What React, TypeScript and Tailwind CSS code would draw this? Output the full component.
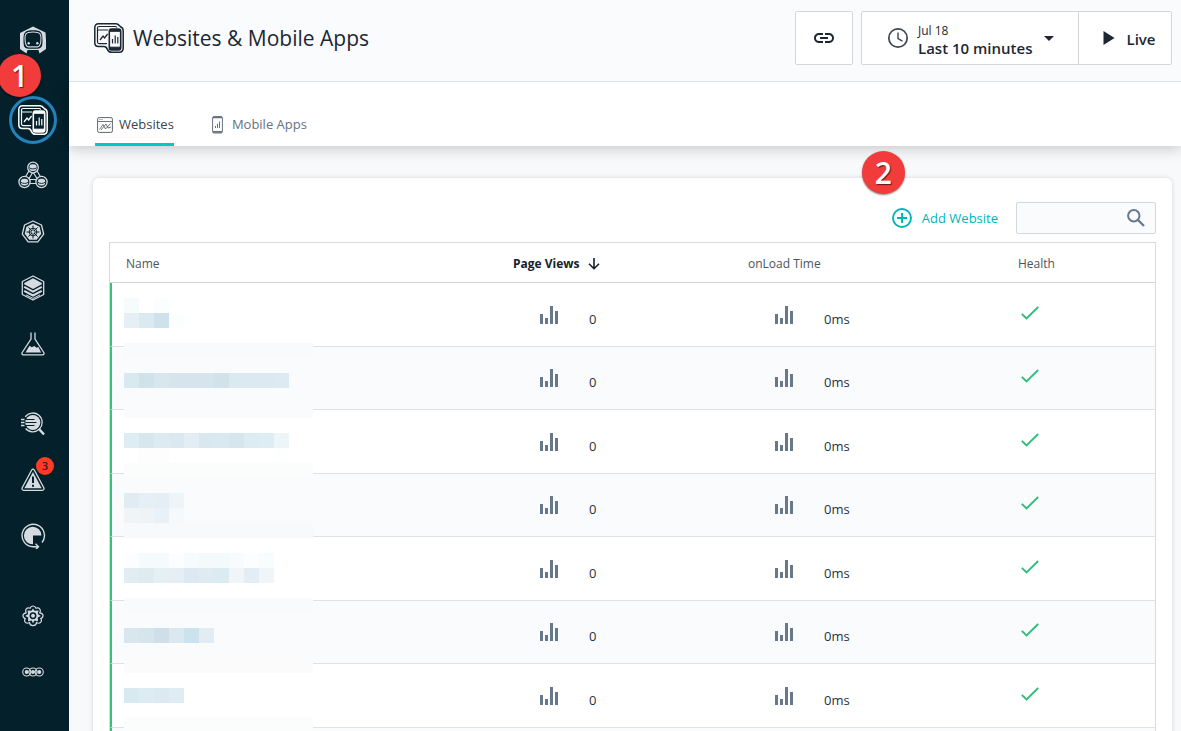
import type { ReactNode } from "react";

const W = "bg-white";
const N = "";

type Strip = { base: string; tiles?: string[] };

const ZEBRA = "bg-[#fafbfd]";

// Pixelated cover over the name column, one entry per 15px band.
const mosaic: Strip[] = [
  { base: W, tiles: ["bg-[#f6fbfc]", N, "bg-[#fcfefe]"] },
  { base: W, tiles: ["bg-[#e6eef6]", "bg-[#dbe9f0]", "bg-[#cfe2ec]", "bg-[#fcfefe]"] },
  { base: W },
  { base: "bg-[#f9fafc]" },
  { base: ZEBRA },
  {
    base: ZEBRA,
    tiles: ["bg-[#d9e9f0]", "bg-[#d0e2ea]", "bg-[#d8e6ee]", "bg-[#d6e4ed]", "bg-[#d6e4ed]", "bg-[#d6e4ed]", "bg-[#d2e2eb]", "bg-[#dbe9f1]", "bg-[#dbe9f1]", "bg-[#dde9f1]", "bg-[#ddeaf2]"],
  },
  { base: ZEBRA },
  { base: "bg-[#fafbfc]" },
  { base: W },
  {
    base: W,
    tiles: ["bg-[#deecf4]", "bg-[#d8e7ee]", "bg-[#deeaf2]", "bg-[#dae8f2]", "bg-[#e3edf3]", "bg-[#d9e7ee]", "bg-[#dae8f1]", "bg-[#d7e5ef]", "bg-[#ddebf3]", "bg-[#deecf4]", "bg-[#ecf5f8]"],
  },
  { base: W, tiles: [N, "bg-[#fdfdfe]", "bg-[#fdfdfe]", N, N, N, N, N, N, N, "bg-[#fdfefe]"] },
  { base: "bg-[#fbfdfc]" },
  { base: ZEBRA },
  { base: ZEBRA, tiles: ["bg-[#e0ecf2]", "bg-[#e6eff5]", "bg-[#e5edf5]", "bg-[#eef5f9]"] },
  { base: ZEBRA, tiles: ["bg-[#f0f4f6]", "bg-[#eef3f5]", "bg-[#e8f0f8]", "bg-[#f5f9fb]"] },
  { base: "bg-[#f8f9fb]" },
  { base: W },
  {
    base: W,
    tiles: ["bg-[#fcfdfe]", "bg-[#f5fafc]", "bg-[#f5fafc]", "bg-[#fbfdfe]", "bg-[#f6fbfc]", "bg-[#f4f9fa]", "bg-[#f3fafb]", "bg-[#f7fbfc]", "bg-[#fcfdfe]", "bg-[#f7fcfc]"],
  },
  {
    base: W,
    tiles: ["bg-[#e1edf3]", "bg-[#dfebf1]", "bg-[#e4f0f3]", "bg-[#e6edf5]", "bg-[#dce9f2]", "bg-[#dfeaf1]", "bg-[#daebf1]", "bg-[#eff5f9]", "bg-[#e4ecf4]", "bg-[#eff5f8]"],
  },
  { base: W },
  { base: "bg-[#f9fafc]" },
  { base: ZEBRA },
  { base: ZEBRA, tiles: ["bg-[#d8e6ee]", "bg-[#d4e5ec]", "bg-[#cfdfe9]", "bg-[#dce8f0]", "bg-[#cce2ec]", "bg-[#e2edf3]"] },
  { base: ZEBRA },
  { base: "bg-[#fbfbfc]" },
  { base: W },
  { base: W, tiles: ["bg-[#d9e9f0]", "bg-[#ddebf3]", "bg-[#dce9f1]", "bg-[#dfecf4]"] },
  { base: W },
  { base: "bg-[#fbfdfc]" },
];

function Svg({ size, box, className, children }: { size: string; box: string; className?: string; children: ReactNode }) {
  return (
    <svg className={`${size} ${className ?? ""}`} viewBox={box} fill="none" aria-hidden="true">
      {children}
    </svg>
  );
}

function WebMobileIcon() {
  return (
    <Svg size="size-[30px]" box="0 0 30 30">
      <path d="M4.500.8H22c2.500 0 3 1.500 4.500 3 2 .8 2.700 2.200 2.700 4.200v17c0 2.700-1.500 4.200-4 4.200h-7.700c-2 0-3.200-.6-4-2.600-.7-1.800-1.400-3-3.500-3H4.500C2 23.600.8 22 .8 19.800V4.500C.8 2.200 2.200.8 4.500.8Z" stroke="currentColor" strokeWidth="1.500" />
      <path d="M13 20.600H5c-1 0-1.500-.6-1.500-1.500V5c0-1 .6-1.500 1.500-1.500h16c1 0 1.500.4 1.800 1M3.500 7H14" stroke="currentColor" strokeWidth="1.200" />
      <path d="m6 17 3-4 1.600 2 3-4" stroke="currentColor" strokeWidth="1.300" />
      <rect x="15.300" y="6.100" width="11.400" height="20.800" rx="2.200" stroke="currentColor" strokeWidth="1.600" />
      <path d="M16 8.300V7h10v1.300ZM16 24.200v2.300h10v-2.300Z" fill="currentColor" stroke="currentColor" />
      <path d="M18.500 20.500V16M21.200 20.500v-8M23.800 20.500V14" stroke="currentColor" strokeWidth="1.200" />
    </Svg>
  );
}

function LogoIcon() {
  return (
    <Svg size="size-7" box="0 0 28 28">
      <path fillRule="evenodd" d="M14 .5 26.500 6.500 27 14v9l-6.500 4.500-1-3.500h-11l-1 3.500L1 23V7Zm-5 4.300C5.500 5.500 4.500 8 4.500 14s.5 8.500 5 8.700h9c4.500-.2 5-3 5-8.700s-1-8.500-4.500-9.200c-3-.6-7-.6-10 0Z" fill="currentColor" />
      <path d="M9.300 6.500c3-.6 6.500-.6 9.400 0 2.600.5 3.300 2 3.300 5.500 0 6-.7 8.700-3.500 8.900h-9C6.700 20.700 6 18 6 12c0-3.500.7-5 3.300-5.500Z" stroke="currentColor" strokeWidth="1.100" />
      <circle cx="9.700" cy="17.300" r="1.200" fill="currentColor" />
      <circle cx="18.300" cy="17.300" r="1.200" fill="currentColor" />
    </Svg>
  );
}

function NodesIcon() {
  return (
    <Svg size="size-[30px]" box="0 0 30 30">
      <path d="M15 7 7 20.500h16Z" stroke="currentColor" strokeWidth="5.200" strokeLinejoin="round" />
      <path d="M15 7 7 20.500h16Z" stroke="#04202b" strokeWidth="2.800" strokeLinejoin="round" />
      <g fill="#04202b" stroke="currentColor" strokeWidth="1.300">
        <circle cx="15" cy="6.500" r="5.300" />
        <circle cx="6.500" cy="21" r="5.600" />
        <circle cx="23.500" cy="21" r="5.600" />
      </g>
      <g fill="currentColor">
        <rect x="11.300" y="3.300" width="7.400" height="6.600" rx="3" />
        <rect x="2.800" y="17.800" width="7.400" height="6.600" rx="3" />
        <rect x="19.800" y="17.800" width="7.400" height="6.600" rx="3" />
      </g>
      <path d="M11.500 6.800c1.500 1.500 5.500 1.500 7 0M3 21.300c1.500 1.500 5.500 1.500 7 0M20 21.300c1.500 1.500 5.500 1.500 7 0" stroke="#04202b" strokeWidth=".9" />
    </Svg>
  );
}

function HelmIcon() {
  return (
    <Svg size="size-6" box="0 0 24 24">
      <path d="m12 1 8.500 4 2.200 9.200-5.900 7.600H7.200L1.300 14.200 3.500 5Z" stroke="currentColor" strokeWidth="1.300" strokeLinejoin="round" />
      <path d="m12 3.500 6.600 3.200 1.700 7.100-4.600 6H8.300l-4.600-6 1.700-7.100Z" fill="currentColor" />
      <g stroke="#04202b" strokeWidth="1">
        <circle cx="12" cy="12" r="3.800" />
        <path d="M12 5.500v13M5.500 12h13M7.400 7.400l9.200 9.200M16.600 7.400l-9.200 9.200" />
      </g>
      <circle cx="12" cy="12" r="1.200" fill="currentColor" />
    </Svg>
  );
}

function LayersIcon() {
  return (
    <Svg size="size-[26px]" box="0 0 26 26">
      <path d="m13 1 10.700 5.500v13L13 25 2.300 19.500v-13Z" stroke="currentColor" strokeWidth="1.300" strokeLinejoin="round" />
      <path d="m13 3.300 8.800 4.600v1.300L13 13.900 4.200 9.200V7.900Z" fill="currentColor" />
      <path d="m4.200 11.900 8.800 4.700 8.800-4.700M4.200 15.800l8.800 4.700 8.800-4.700" stroke="currentColor" strokeWidth="2" />
      <path d="m6 19.900 7 3.500 7-3.500" stroke="currentColor" strokeWidth="1" />
    </Svg>
  );
}

function FlaskIcon() {
  return (
    <Svg size="size-6" box="0 0 24 24">
      <path d="M10 .5V7L1.200 20.500c-.7 1.200 0 2.300 1.200 2.300h19.200c1.200 0 1.900-1.100 1.200-2.300L14 7V.5" stroke="currentColor" strokeWidth="1.300" />
      <path d="m4.500 20.600 4-6.800 2.300 1.500 2.600-1.300 2.200 1.800 1.800-.7 2.700 5.500Z" fill="currentColor" />
    </Svg>
  );
}

function AnalyzeIcon() {
  return (
    <Svg size="size-6" box="0 0 24 24">
      <path d="M4.200 4.800A9.400 9.400 0 1 1 4.600 16.500" stroke="currentColor" strokeWidth="1.300" />
      <circle cx="11.800" cy="10.500" r="7.500" fill="currentColor" />
      <path d="m18 17 5 5.500" stroke="currentColor" strokeWidth="2.600" />
      <path d="M0 7.500h3.500M0 10.500h3.500M0 13.500h3.500" stroke="currentColor" strokeWidth="1.300" />
      <path d="M4.500 7.500h9M4.500 10.500h11M4.500 13.500h9" stroke="#04202b" strokeWidth="1.200" />
    </Svg>
  );
}

function WarningIcon() {
  return (
    <Svg size="size-6" box="0 0 24 24">
      <path d="M10.700 2c.6-1.200 2-1.200 2.600 0l9.500 17.700c.6 1.300-.1 2.600-1.500 2.600H2.700c-1.400 0-2.100-1.300-1.500-2.600Z" stroke="currentColor" strokeWidth="1.300" />
      <path d="M12 4 20.600 20.200H3.400Z" fill="currentColor" />
      <path d="M12 8.500V15M12 16.800v1.900" stroke="#04202b" strokeWidth="2" />
    </Svg>
  );
}

function SloIcon() {
  return (
    <Svg size="size-[26px]" box="0 0 26 26">
      <path d="M22 19.500A11.200 11.200 0 1 0 13 23.700h5M15.500 20.800l3 2.900-3 2.900" stroke="currentColor" strokeWidth="1.400" />
      <path d="M21.500 12.500A8.800 8.800 0 1 0 13 21.300v-8.800Z" fill="currentColor" />
    </Svg>
  );
}

function GearIcon() {
  return (
    <Svg size="size-[22px]" box="0 0 22 22">
      <path d="M11 1c2 0 2.600 1 3 2.300 1.200-.5 2.700-.6 3.800.8 1 1.300.6 2.500 0 3.700 1.500.2 2.900.9 3.200 2.500.3 1.800-.8 2.800-2.200 3.300.8 1.300.9 2.800-.4 4-1.300 1-2.700.7-3.900 0-.2 1.600-1.200 3-3.500 3s-3.300-1.400-3.500-3c-1.200.7-2.600 1-3.900 0-1.300-1.200-1.200-2.700-.4-4C1.800 13.100.7 12.100 1 10.300c.3-1.600 1.700-2.300 3.200-2.500-.6-1.200-1-2.400 0-3.700C5.300 2.700 6.800 2.800 8 3.300 8.400 2 9 1 11 1Z" stroke="currentColor" strokeWidth="1.200" />
      <path d="m11 3.500 1.500 2.200 4-.2-.7 3.500 3 2-3 1.600.2 3.700-3.600-.7L11 18.300l-1.400-2.700-3.600.7.200-3.700-3-1.600 3-2-.7-3.500 4 .2Z" fill="currentColor" />
      <circle cx="11" cy="10.800" r="2.700" fill="currentColor" stroke="#04202b" strokeWidth="1.500" />
    </Svg>
  );
}

function MoreIcon() {
  return (
    <Svg size="size-[22px]" box="0 0 22 22">
      <g stroke="currentColor" strokeWidth="1.100">
        <circle cx="4.700" cy="11" r="4" />
        <circle cx="11" cy="11" r="4" />
        <circle cx="17.300" cy="11" r="4" />
      </g>
      <g fill="currentColor">
        <circle cx="4.700" cy="11" r="2" />
        <circle cx="11" cy="11" r="2" />
        <circle cx="17.300" cy="11" r="2" />
      </g>
    </Svg>
  );
}

function NavButton({ label, children }: { label: string; children: ReactNode }) {
  return (
    <button type="button" aria-label={label} className="flex h-14 w-full items-center justify-center">
      {children}
    </button>
  );
}

function Marker({ className, children }: { className: string; children: ReactNode }) {
  return (
    <span className={`absolute flex size-[43px] items-center justify-center rounded-full bg-[#f23b3b] text-[30px] leading-none font-semibold text-white shadow-[0_1px_2px_rgba(0,0,0,0.5)] [text-shadow:1px_1px_1px_rgba(0,0,0,0.6)] ${className}`}>
      {children}
    </span>
  );
}

function Sidebar() {
  return (
    <nav aria-label="Main" className="relative flex w-[69px] shrink-0 flex-col bg-[#04202b] pt-3 pr-[3px] text-[#d5dbe0]">
      <NavButton label="Home"><LogoIcon /></NavButton>
      <div className="mt-6">
        <button type="button" aria-label="Websites and mobile apps" className="flex h-14 w-full items-center justify-center text-white">
          <span className="flex size-12 items-center justify-center rounded-full border-3 border-[#2384bd]">
            <WebMobileIcon />
          </span>
        </button>
        <NavButton label="Applications"><NodesIcon /></NavButton>
        <NavButton label="Kubernetes"><HelmIcon /></NavButton>
        <NavButton label="Infrastructure"><LayersIcon /></NavButton>
        <NavButton label="Synthetic monitoring"><FlaskIcon /></NavButton>
      </div>
      <div className="mt-6">
        <NavButton label="Analytics"><AnalyzeIcon /></NavButton>
        <NavButton label="Events">
          <span className="relative">
            <WarningIcon />
            <span className="absolute -top-[11px] left-[15px] flex size-[18px] items-center justify-center rounded-full bg-[#ff3b26] text-[11px] font-semibold text-[#222]">3</span>
          </span>
        </NavButton>
        <NavButton label="Service levels"><SloIcon /></NavButton>
      </div>
      <div className="mt-6">
        <NavButton label="Settings"><GearIcon /></NavButton>
        <NavButton label="More"><MoreIcon /></NavButton>
      </div>
      <Marker className="top-[54px] -left-0.5">1</Marker>
    </nav>
  );
}

function Header() {
  return (
    <header className="relative z-20 flex h-[82px] shrink-0 items-start justify-between border-b border-[#dce3e8] bg-[#fafbfd] pr-[9px] pl-[25px] text-[#1c2733]">
      <div className="flex items-center gap-[9px] pt-[22px]">
        <WebMobileIcon />
        <h1 className="text-[21px] leading-8">Websites &amp; Mobile Apps</h1>
      </div>
      <div className="flex gap-2 pt-[11px]">
        <button type="button" aria-label="Copy link" className="flex h-[54px] w-[58px] items-center justify-center rounded-xs border border-[#d3d7da] bg-white">
          <Svg size="size-6" box="0 0 24 24">
            <path d="M3.900 12c0-1.710 1.390-3.100 3.100-3.100h4V7H7c-2.760 0-5 2.240-5 5s2.240 5 5 5h4v-1.900H7c-1.710 0-3.100-1.390-3.100-3.100M8 13h8v-2H8zm9-6h-4v1.900h4c1.710 0 3.100 1.390 3.100 3.100s-1.390 3.100-3.100 3.100h-4V17h4c2.760 0 5-2.240 5-5s-2.240-5-5-5" fill="currentColor" />
          </Svg>
        </button>
        <div className="flex h-[54px] rounded-xs border border-[#d3d7da] bg-white">
          <button type="button" className="flex w-[217px] items-center border-r border-[#d3d7da] pl-6">
            <Svg size="size-6" box="0 0 24 24" className="text-[#3d4650]">
              <circle cx="12" cy="12" r="9.200" stroke="currentColor" strokeWidth="1.700" />
              <path d="M12 6.500V12.500l4.500 2.700" stroke="currentColor" strokeWidth="1.400" />
            </Svg>
            <span className="ml-2 flex flex-col pt-1 text-left">
              <span className="text-[12px] leading-4">Jul 18</span>
              <span className="text-[15px] leading-[18px] font-semibold whitespace-nowrap">Last 10 minutes</span>
            </span>
            <Svg size="h-[5px] w-[10px]" box="0 0 10 5" className="ml-3">
              <path d="M0 0h10L5 5Z" fill="currentColor" />
            </Svg>
          </button>
          <button type="button" className="flex w-[92px] items-center justify-center gap-3 pl-2">
            <Svg size="h-[14px] w-[12px]" box="0 0 12 14">
              <path d="M.5 0 11.500 7 .5 14Z" fill="currentColor" />
            </Svg>
            <span className="pt-0.5 text-[15px] leading-5 font-semibold">Live</span>
          </button>
        </div>
      </div>
    </header>
  );
}

function Tabs() {
  return (
    <div className="z-10 flex h-16 shrink-0 gap-9 bg-white pl-[26px] text-[13px] shadow-[0_2px_14px_rgba(0,0,0,0.22)]" role="tablist">
      <button type="button" role="tab" aria-selected="true" className="flex items-center gap-1.5 border-b-3 border-[#00c8c8] pt-6 pl-0.5 text-[#3b444c]">
        <Svg size="size-4" box="0 0 16 16" className="text-[#5f676e]">
          <rect x=".6" y=".6" width="14.800" height="14.800" rx="1.500" stroke="currentColor" />
          <path d="M1 4.500h14M2.500 2.500h1M4.500 2.500h1M2.500 12.500l3.500-5 2.500 4.500 5-5.500M4 13l5-6 2 4 3-1" stroke="currentColor" strokeWidth=".9" />
        </Svg>
        Websites
      </button>
      <button type="button" role="tab" aria-selected="false" className="flex items-center gap-1.5 border-b-3 border-transparent pt-6 text-[#66727f]">
        <Svg size="h-[18px] w-4" box="0 0 16 18">
          <rect x="2.600" y=".6" width="9.800" height="16.400" rx="1.300" stroke="currentColor" />
          <path d="M3 1.300h9M3 15.800h9" stroke="currentColor" strokeWidth="1.700" />
          <path d="M5.500 12v-2M7.500 12V8M9.500 12V5.500" stroke="currentColor" />
        </Svg>
        Mobile Apps
      </button>
    </div>
  );
}

function BarsIcon() {
  return (
    <Svg size="h-[18px] w-[19px]" box="0 0 19 18">
      <path d="M0 8h3v10H0ZM5 12h3v6H5ZM10 0h3v18h-3ZM15 5h3v13h-3Z" fill="#67788b" />
    </Svg>
  );
}

function Metric({ value }: { value: string }) {
  return (
    <td className="border-b border-[#dde2e6] p-0 pl-[43px]">
      <div className="flex items-center gap-[30px]">
        <BarsIcon />
        <span className="pt-2 text-[13px] leading-4 text-[#28323c]">{value}</span>
      </div>
    </td>
  );
}

function WebsiteTable() {
  const head = "h-10 border-b border-[#d3d5d8] px-4 pt-0.5 font-normal text-[#4a545e]";
  return (
    <div className="relative mt-2">
      <table className="w-full table-fixed border-separate border-spacing-0 border border-[#d8dbde] text-left text-[12px]">
        <colgroup>
          <col />
          <col className="w-[235px]" />
          <col className="w-[270px]" />
          <col className="w-[153px]" />
        </colgroup>
        <thead>
          <tr>
            <th className={head}>Name</th>
            <th className="h-10 border-b border-[#d3d5d8] px-4 pt-0.5 text-[#16212c]" aria-sort="descending">
              <button type="button" className="flex items-center gap-2 font-bold">
                Page Views
                <Svg size="size-3" box="0 0 12 12">
                  <path d="M6 0v10.500M1 5.700l5 5 5-5" stroke="currentColor" strokeWidth="1.600" />
                </Svg>
              </button>
            </th>
            <th className={head}>onLoad Time</th>
            <th className={head}>Health</th>
          </tr>
        </thead>
        <tbody>
          {Array.from({ length: 7 }, (_, i) => (
            <tr key={i} className="odd:h-16 even:h-[63px] even:bg-[#fafbfd]">
              <td className="border-b border-l-2 border-b-[#dde2e6] border-l-[#3bbf7c] p-0" />
              <Metric value="0" />
              <Metric value="0ms" />
              <td className="border-b border-[#dde2e6] p-0 pb-1 pl-[19px]">
                <Svg size="h-[14px] w-[18px]" box="0 0 18 14">
                  <path d="m.8 7.800 4.700 4.700L17.200 1" stroke="#2fbf7b" strokeWidth="1.900" />
                </Svg>
              </td>
            </tr>
          ))}
          <tr className="h-[63px] bg-[#fafbfd]">
            <td className="border-l-2 border-l-[#3bbf7c] p-0" />
            <td colSpan={3} />
          </tr>
        </tbody>
      </table>
      <div aria-hidden="true" className="absolute top-14 left-[15px] w-[189px]">
        {mosaic.map((strip, i) => (
          <div key={i} className={`flex h-[15px] ${strip.base}`}>
            {strip.tiles?.map((tile, j) => <span key={j} className={`w-[15px] ${tile}`} />)}
          </div>
        ))}
      </div>
    </div>
  );
}

export default function App() {
  return (
    <div className="flex h-screen overflow-hidden bg-[#f8f9fb] font-['Open_Sans','Noto_Sans',sans-serif]">
      <Sidebar />
      <div className="flex min-w-0 flex-1 flex-col">
        <Header />
        <Tabs />
        <main className="relative z-20 flex-1 pt-8 pr-[9px] pl-6">
          <section className="rounded-md bg-white px-4 pt-6 shadow-[0_0_5px_rgba(0,0,0,0.14)]">
            <div className="flex items-center justify-end gap-[18px]">
              <div className="relative">
                <button type="button" className="flex h-8 items-center gap-2.5 text-[13px] text-[#00b4b8]">
                  <Svg size="size-5" box="0 0 20 20">
                    <circle cx="10" cy="10" r="9" stroke="currentColor" strokeWidth="1.900" />
                    <path d="M10 5v10M5 10h10" stroke="currentColor" strokeWidth="1.900" />
                  </Svg>
                  <span className="pt-0.5">Add Website</span>
                </button>
                <Marker className="-top-[51px] -left-[30px]">2</Marker>
              </div>
              <div className="flex h-8 w-[140px] items-center rounded-xs border border-[#d0d8de] bg-[#fafbfd] pr-2.5">
                <input type="search" aria-label="Search websites" className="h-full min-w-0 flex-1 bg-transparent px-2 text-[13px] outline-none" />
                <Svg size="size-[18px]" box="0 0 18 18">
                  <circle cx="6.800" cy="6.800" r="5.700" stroke="#66788c" strokeWidth="2" />
                  <path d="m11 11 6 6" stroke="#66788c" strokeWidth="2.300" />
                </Svg>
              </div>
            </div>
            <WebsiteTable />
          </section>
        </main>
      </div>
    </div>
  );
}
